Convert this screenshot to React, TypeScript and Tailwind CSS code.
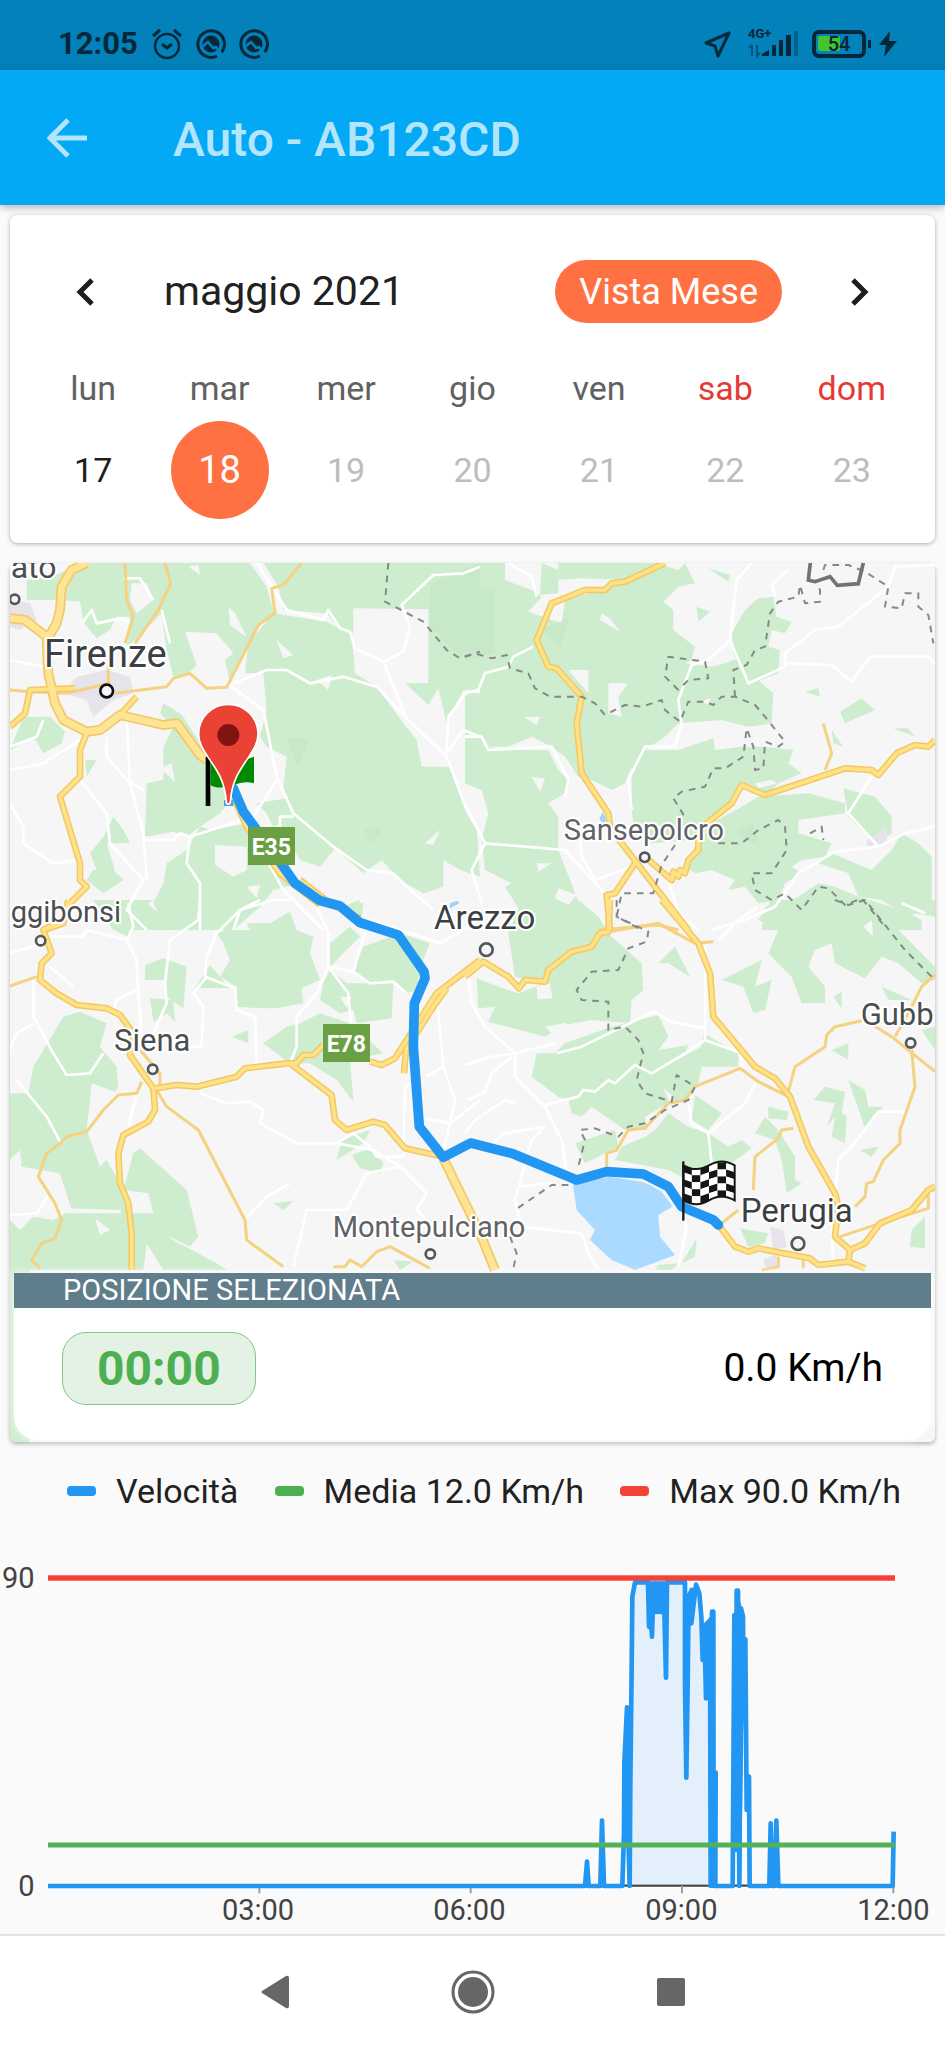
const week = [
  { name: "lun", day: 17 },
  { name: "mar", day: 18 },
  { name: "mer", day: 19 },
  { name: "gio", day: 20 },
  { name: "ven", day: 21 },
  { name: "sab", day: 22 },
  { name: "dom", day: 23 },
];

const legend = [
  { label: "Velocità", color: "bg-[#2196f3]" },
  { label: "Media 12.0 Km/h", color: "bg-[#4caf50]" },
  { label: "Max 90.0 Km/h", color: "bg-[#f44336]" },
];

type Tile = {
  x: number;
  y: number;
  forest: string[];
  clearings: string[];
  minor: string[];
  thin: string[];
  main: string[];
  motorway: string[];
  borders: string[];
};

// The map is split in four tiles, each with its own origin
const tiles: Tile[] = [
  {
    x: 0,
    y: 0,
    forest: [
      "255,39 750,39 800,110 822,190 775,225 745,280 690,400 675,330 700,310 650,250 555,245 590,345 565,370 520,380 500,300 485,190 400,275 380,290 390,200 350,200 330,240 290,265 250,215 240,155 185,150 80,150 80,90 165,75",
      "790,39 1440,39 1440,415 1390,420 1340,520 1315,415 1285,465 1215,400 1285,400 1285,178 1060,175 1060,250 1020,240 980,190 850,180 835,110",
      "820,190 980,215 1055,255 1065,370 1130,410 1210,520 1250,570 1265,650 1350,650 1390,760 1430,830 1440,980 1380,960 1330,930 1330,1010 1270,1030 1200,990 1145,930 1090,970 1000,890 920,850 880,790 850,710 860,620 800,590 780,560 800,480 790,370 735,370 745,280",
      "490,460 540,490 550,500 600,580 620,640 700,740 660,790 600,830 560,860 520,845 435,860 440,700 490,690 490,590 520,530 480,490",
      "770,760 860,745 905,830 1010,890 960,950 900,930 840,820 820,830 800,790",
      "30,600 70,500 150,500 195,545 185,580 130,610 100,560 50,590",
      "255,630 290,630 260,680",
      "340,800 370,840 390,880 320,880 345,960 290,960 270,910 310,860",
      "280,960 340,960 370,990 310,1030 260,990",
      "500,940 560,900 600,830 640,840 740,820 760,840 830,910 900,1000 820,1020 780,1070 700,1140 500,1140 460,1060 490,1000",
      "350,1070 440,1060 540,1140 380,1140",
      "1050,1060 1090,1060 1085,1100",
    ],
    clearings: [
      "395,100 440,100 460,150 410,190 390,150",
      "685,170 705,190 740,262 690,225",
      "480,655 515,640 525,695",
      "645,885 740,890 740,960 700,980 645,945",
      "830,270 880,315 850,325",
      "565,50 600,75 595,45",
      "950,390 995,375 985,420",
      "1275,880 1320,840 1300,885",
      "740,1010 780,1005 770,1045",
    ],
    minor: [
      "370,85 420,85 460,150",
      "250,215 275,180 290,220 360,205 390,215",
      "770,39 860,180 970,210 985,180 1020,235 1050,245 1065,295 1150,335 1220,505 1340,620 1400,780 1440,850",
      "1440,50 1390,70 1300,75 1205,165 1230,230 1210,305 1150,335",
      "680,400 790,480 830,680 880,790 1000,890 1100,960 1180,970 1230,1020 1300,1080",
      "700,400 800,360 860,360 930,400 1030,380 1130,410 1215,500",
      "430,870 520,870 540,850 570,860 760,800 830,690",
      "570,860 560,940 600,1000 600,1140",
      "30,660 130,640 240,570",
      "30,590 110,560 130,510",
      "240,690 320,790 330,880 430,990 380,1080 440,1140",
      "380,500 390,700 430,850 440,990",
      "320,560 320,620 380,690 430,720",
      "1440,425 1400,425 1345,500 1340,610 1390,540 1440,560",
      "700,1140 720,1080 820,1050 880,1050",
      "740,820 850,1020 970,1140",
      "840,840 840,800 880,800",
      "30,330 130,350",
      "485,180 510,280",
      "30,760 70,830 70,880 160,940 240,930",
    ],
    thin: [
      "30,420 90,425 200,430 330,400",
      "345,430 500,410 520,385 570,370 620,415 680,412 775,225 825,190 815,115 850,105 905,39",
      "375,39 380,150 400,200 375,280",
      "495,39 512,100 475,180 405,280",
      "325,340 325,400",
    ],
    main: [
      "30,530 75,490 90,420 225,415",
      "260,550 240,600 240,680 180,740 240,940 240,990 260,1010 210,1060 190,1110 130,1140",
      "360,495 410,440",
      "700,740 740,830 840,970 960,1065",
      "900,990 990,1060 1080,1105",
    ],
    motorway: [
      "260,39 215,60 185,110 180,180 170,220 140,270 145,370 165,460 190,510 260,545 300,540 360,495 490,525 530,520 600,615 620,630",
      "30,205 75,210 140,260",
    ],
    borders: ["1165,39 1155,155 1270,215 1340,300 1380,325 1440,305"],
  },
  {
    x: 1395,
    y: 0,
    forest: [
      "0,39 120,39 120,90 200,120 230,140 190,185 290,220 300,150 370,130 440,100 590,45 640,60 660,39 690,100 640,110 595,155 625,180 625,240 690,290 680,330 660,340 740,350 780,340 830,320 890,400 925,430 920,520 850,530 770,510 640,520 600,560 540,600 500,650 480,700 440,720 380,690 340,680 300,620 260,590 200,560 130,590 60,590 0,560",
      "230,39 280,60 280,130 225,135",
      "280,39 580,39 480,90 350,85 280,90",
      "0,560 60,590 130,600 250,600 280,660 310,690 300,730 250,760 280,800 280,900 350,1080 400,1140 200,1140 120,1010 140,1000 60,960 50,870 70,790 50,720 0,700",
      "540,600 640,600 745,565 750,600 830,590 890,590 985,600 970,640 1010,670 940,700 900,740 830,710 800,760 740,800 720,830 680,870 560,880 510,860 500,780 500,650",
      "700,870 720,830 830,770 880,740 1030,730 1140,760 1140,790 1000,810 1000,850 1100,880 1080,920 1010,930 980,950 1010,970 960,1000 940,1050 880,1060 840,1010 790,1020 810,990 740,960 690,970 660,950",
      "800,250 840,180 880,145 925,140 935,200 980,215 960,250 920,240 910,290 945,300 940,370 860,400 830,360 805,310",
      "1135,715 1230,740 1280,800 1280,850 1230,880 1150,800",
      "1060,940 1100,910 1220,960 1280,900 1310,850 1360,880 1400,920 1400,1070 1330,1100 1250,1050 1180,1040 1150,970",
      "930,1070 1000,1040 1060,1000 1110,1010 1180,1040 1310,1080 1370,1110 1370,1140 890,1140 900,1070",
      "1125,485 1190,445 1230,480 1140,520",
      "1020,425 1060,415 1065,440",
      "1285,535 1330,535 1350,560",
      "695,170 735,185 700,215",
      "730,55 795,75 790,95",
      "1100,540 1135,590 1105,580",
    ],
    clearings: [
      "430,400 490,400 460,440 470,500 430,490",
      "410,190 435,205 465,245 405,210",
      "175,500 225,500 215,525",
      "310,360 370,360 370,430",
      "200,680 240,685 225,725",
      "215,940 260,940 220,965",
      "280,1015 335,1035 310,1065 270,1045",
      "870,700 920,690 935,700 880,715",
      "705,455 735,445 735,465",
      "120,45 200,60 210,120 150,90 120,90",
    ],
    minor: [
      "130,39 200,80 215,140",
      "205,290 145,320 130,350 60,370 40,420 0,430",
      "860,39 815,90 795,270 730,330 680,345 640,450 650,520 630,590 540,590 490,690 500,780",
      "795,270 850,400 960,350 960,310 1050,240 1120,230 1270,110 1290,50 1410,45",
      "960,340 1100,345 1160,395 1215,320 1390,320 1410,340",
      "0,560 50,560 70,600 260,590 310,690 300,740",
      "970,60 920,105 930,140",
      "0,760 60,880 180,890 300,900 420,1030",
      "60,880 20,960 50,1060",
      "1410,830 1320,850 1240,890 1150,790 1220,680",
      "1240,890 1110,905 1000,970 930,1070 840,1110 740,1140",
      "345,860 350,920 390,990 500,950",
      "610,990 640,1090 700,1140",
    ],
    thin: ["1075,520 1100,610 1080,660", "400,1140 580,1125 640,1140"],
    main: [
      "600,39 480,95 440,100 420,120 360,120 260,160 215,270 250,350 275,355 350,440 335,520 350,670 430,790 435,830 470,880 670,1140",
      "1410,570 1390,590 1350,585 1295,610 1240,675 1220,660 1140,655 900,735 830,705 800,760 700,840 700,900 670,930 660,970 645,960 640,980 625,965 620,990 545,925",
      "510,940 450,1030 425,1035 435,1140",
    ],
    motorway: [],
    borders: [
      "0,320 30,310 80,325 125,315 135,355 190,370 210,415 255,440 350,440 390,460 420,495 480,465 530,470 590,450 600,480 645,515 670,455 720,455 745,465 770,440 810,440 870,465 900,500 960,575 940,590 900,575 895,655 870,660 865,590 845,535 835,620 780,655 745,655 720,710 650,725 625,745 665,810",
      "810,440 805,360 845,345 870,300 900,290 915,190 940,155 1000,140 1005,105 1020,160 1065,155 1065,120 1050,90",
      "640,420 600,380 610,320 720,335 730,385 670,390 640,420",
      "1075,60 1080,45 1150,45 1200,65 1270,110 1260,170 1310,175 1320,130 1360,130 1360,170 1390,195 1405,280",
      "630,885 590,945 565,1030 470,1030 455,1100 530,1140",
      "760,880 830,880 880,840 940,810 960,830 965,900 920,970 860,970 870,1020 920,1050 960,1030 1010,1080 1060,1010 1090,1015 1140,1065 1190,1045 1260,1130",
      "1035,850 1070,830 1075,870",
    ],
  },
  {
    x: 0,
    y: 1050,
    forest: [
      "680,90 750,90 740,70 810,70 870,35 890,90 940,110 930,160 960,240 905,265 910,310 830,325 780,325 710,320 710,260 660,230 690,180 670,130 650,100",
      "280,0 600,0 600,50 570,80 500,80 460,0 390,50 385,110 340,90",
      "435,195 490,175 560,200 550,325 500,290 495,240 435,240",
      "450,295 520,300 525,365 500,340 460,365",
      "585,265 630,195 690,265",
      "990,130 1050,80 1080,110 1030,160 990,200",
      "1060,210 1090,140 1200,100 1290,130 1260,200 1250,270 1220,280 1190,250 1110,250",
      "970,250 990,210 1040,250 1180,250 1175,355 1070,370 1060,330 1020,340 960,300",
      "790,430 860,380 900,370 960,340 1050,370 1150,460 1050,480 1060,605 1010,540 930,490 870,490 830,460",
      "160,400 190,350 240,335 320,370 300,440 350,500 355,560 345,575 275,550 270,600 260,690 300,800 320,780 370,870 400,760 420,745 560,870 595,1010 570,1040 510,1010 500,1110 30,1110 30,960 60,990 100,950 160,960 215,930 180,820 65,800 60,750 30,780 30,580 85,580 100,500 130,450",
      "500,1010 650,1090 680,1110 500,1110",
      "1025,720 1110,690 1090,730 1010,780",
      "1055,765 1110,745 1150,790 1140,820 1080,805",
      "820,910 880,903 850,930",
      "695,410 745,390 745,430",
      "1180,1080 1240,1085 1200,1110",
      "1030,20 1080,0 1070,50",
    ],
    clearings: [
      "370,870 445,880 460,940 380,940",
      "285,955 330,990 300,1005",
      "440,1030 490,1110 430,1110",
      "1020,290 1055,290 1040,325",
      "195,925 365,930 360,940 200,940",
    ],
    minor: [
      "130,110 250,110 260,90 380,120 410,180 415,290 430,460",
      "410,270 350,300 340,340",
      "385,10 400,80 380,120",
      "600,0 595,60 510,120 495,250 500,310 460,400",
      "780,0 720,30 650,100 620,170 615,230 705,265 710,330 765,350 770,490",
      "620,230 580,280 610,320 605,440 570,440",
      "950,20 985,100 985,200 1045,280 1055,400",
      "985,200 950,280 890,350 890,440 870,490",
      "985,200 1060,215 1085,130 1110,60 1320,130 1440,60",
      "1060,215 1110,250 1180,245 1220,280",
      "100,240 100,350 160,460 200,525 270,520 310,460",
      "30,450 50,400 100,370",
      "50,540 140,650 180,725",
      "600,580 680,610 750,605 790,630 780,670 890,730 1010,730 1120,750 1200,800 1280,880 1250,930 1320,1000",
      "1010,730 1060,700 1110,740 1130,770 1210,770 1215,560 1260,540",
      "735,960 800,890 870,850",
      "1200,800 1100,820 1040,930 920,930 880,1100",
      "410,580 385,680",
      "1310,280 1330,500 1280,530",
      "1330,500 1365,600 1330,760",
      "30,945 110,940 150,880",
      "1250,650 1350,670 1440,600",
      "30,160 110,135",
      "150,200 220,260",
    ],
    thin: [
      "30,258 110,230",
      "470,570 500,620 595,690 735,960 740,1020 850,1100",
      "425,545 410,580 355,585 310,630 260,695 200,710 180,730 140,760 115,830 165,910 185,960 165,1015 125,1030 95,1080 120,1105",
      "420,450 480,520 480,570",
      "1000,1100 1035,1100 1050,1080 1085,1100 1130,1055 1170,1040 1290,1105",
    ],
    main: [
      "205,0 190,70 130,90 155,160 125,190 120,240 170,280 230,315 320,325 360,345 400,400 390,465 460,565 465,630 445,665 370,705 355,760 360,850 385,910 395,1000 395,1110",
      "465,565 530,555 590,560 710,530 735,505 860,490 890,490 910,465 940,465 970,435",
      "870,490 995,585 1005,660 1040,690 1120,665 1155,675 1215,745 1330,770",
      "1110,485 1145,495 1185,475 1310,280 1440,180",
      "1212,520 1218,450 1300,320 1340,265",
    ],
    motorway: ["1330,775 1440,1000 1485,1110"],
    borders: [],
  },
  {
    x: 1395,
    y: 1050,
    forest: [
      "130,100 170,0 340,0 400,50 440,110 530,190 535,270 500,300 495,370 380,360 300,375 240,410 70,365 90,320 40,325 35,235 100,260 160,280 240,250 150,230",
      "215,460 270,460 300,430 440,380 580,345 610,410 580,450 670,435 660,460 560,520 710,440 715,400 820,460 820,500 710,500 700,550 660,600 610,610 540,650 545,690 480,690 380,620 350,650 320,640 310,600 280,590 200,530",
      "610,640 670,680 730,700 790,740 830,720 860,745 800,790 770,820 650,830 610,810 450,780 470,740 540,710 570,690",
      "690,585 770,640 730,690 680,660",
      "330,730 450,690 460,740 360,790",
      "580,190 630,140 675,230 610,190",
      "770,240 890,180 870,260 920,240 900,330 865,340 835,260",
      "880,60 920,0 1220,0 1310,100 1410,200 1410,240 1370,250 1300,190 1250,170 1200,235 1110,190 1100,130 1050,150 1030,200 1080,260 1080,310 1010,310 980,230 910,160 940,90",
      "1270,0 1410,0 1410,50 1350,40 1310,10",
      "1250,260 1340,300 1270,300",
      "1105,290 1130,275 1130,325",
      "1100,450 1150,430 1150,480",
      "1045,600 1080,560 1140,575 1130,640 1145,650 1140,730 1100,710 1110,650 1085,680 1110,610",
      "1150,540 1200,570 1210,620 1255,620 1200,685",
      "910,620 970,635 965,660 910,655",
      "870,700 900,650 940,690 990,770 990,840 1010,850 965,880 950,780 930,720",
      "1185,750 1240,740 1220,770",
      "825,985 910,1000 900,1030 850,1040",
      "1340,990 1380,950 1380,1045 1335,1040",
      "650,1090 695,1015 690,1070",
      "580,1095 640,1090 620,1110 570,1110",
      "1370,390 1410,380 1410,450",
    ],
    clearings: [
      "215,260 255,250 262,295 218,298",
      "1195,80 1220,60 1225,110",
      "240,380 305,368 285,425",
      "595,565 625,590 615,610",
    ],
    minor: [
      "10,230 20,310 60,380 150,460 150,530 240,620 290,720 310,850",
      "0,495 80,470 150,460 270,430",
      "275,460 350,440 565,335 620,365 720,385",
      "720,140 720,420 660,460 560,520 510,495 450,550 430,540 390,575 355,570 340,590 240,615",
      "720,420 830,460 830,500",
      "150,610 120,600 30,660 0,700",
      "240,680 200,720 150,900 170,980 350,1000 370,1060 400,1110",
      "240,680 120,700 70,740",
      "870,550 840,610 730,700 740,790",
      "730,700 680,670 670,610",
      "880,20 820,60 760,120",
      "1320,635 1240,635 1160,740 1120,780 1110,900",
      "640,1100 665,980 650,930",
      "10,600 60,575 80,520 140,470",
      "160,860 260,850",
      "1100,960 1105,1090",
      "1310,10 1380,40",
    ],
    thin: [
      "405,100 580,70 690,130 745,125",
      "970,575 990,500 1080,440 1085,405 1110,380 1200,360 1280,410 1410,515",
      "1410,225 1370,260 1340,320 1290,410",
      "1340,450 1350,560 1305,690 1305,730 1255,780 1225,845 1205,850 1200,890 1170,920",
      "985,685 950,690 940,715 870,770 865,870",
      "820,930 770,970",
      "425,800 425,760 455,750 490,690 540,685 610,610 660,600 690,560 825,505 880,545 970,590",
      "1125,1010 1245,970 1390,925 1390,880",
      "940,1070 940,1100 890,1110",
      "1015,1080 1015,1105",
    ],
    main: [
      "0,230 55,185 130,230 162,265 180,240 240,245 250,210 320,155 380,140 405,100 430,95 435,0",
      "590,0 700,130 735,220 745,350 870,500 930,535 975,590 1030,740 1110,880 1120,920 1110,1010 1155,1050 1150,1085 1060,1095 1035,1075 880,1045 850,1055 810,1040 765,980",
      "1155,1050 1200,1030 1245,970 1340,930 1390,870 1410,860",
      "1150,1085 1200,1105",
    ],
    motorway: [],
    borders: [
      "455,0 455,50 550,95 545,125 490,145 460,210 380,215 335,270 350,300 430,305 430,390 480,380 520,420 535,460 515,540 540,580 620,605 635,525 690,560 670,600 600,630 540,670 490,680 460,710 390,685 345,690 360,720 340,800",
      "310,855 260,855 150,930",
      "135,1010 155,1060 145,1105",
      "1110,0 1150,15 1200,0 1240,50 1320,150 1410,240",
    ],
  },
];

const route =
  "700,715 730,785 850,950 885,1000 960,1052 1020,1068 1080,1118 1195,1155 1272,1265 1275,1285 1243,1360 1240,1490 1258,1730 1330,1822 1412,1779 1535,1810 1730,1890 1820,1865 1930,1872 2005,1910 2045,1970 2140,2010 2155,2025";

const places = [
  { name: "ato", x: 32, y: 84, size: 96, color: "#4a4e51", dot: [44, 148] },
  { name: "ggibonsi", x: 32, y: 1116, size: 87, color: "#4a4e51", dot: [122, 1172] },
  { name: "Firenze", x: 132, y: 352, size: 114, color: "#3c4043", dot: [320, 423] },
  { name: "Arezzo", x: 1302, y: 1136, size: 99, color: "#3c4043", dot: [1459, 1199] },
  { name: "Sansepolcro", x: 1691, y: 870, size: 87, color: "#5f6368", dot: [1934, 922] },
  { name: "Siena", x: 342, y: 1502, size: 93, color: "#4a4e51", dot: [458, 1558] },
  { name: "Montepulciano", x: 998, y: 2060, size: 87, color: "#5f6368", dot: [1291, 2112] },
  { name: "Perugia", x: 2222, y: 2016, size: 99, color: "#3c4043", dot: [2394, 2081] },
  { name: "Gubb", x: 2582, y: 1424, size: 93, color: "#4a4e51", dot: [2732, 1479] },
];

const line = (points: string) => <polyline key={points} points={points} />;
const area = (points: string) => <polygon key={points} points={points} />;

type Layer = "minor" | "thin" | "main" | "motorway" | "borders";

function Lines({ layer, color, width, dash }: { layer: Layer; color: string; width: number; dash?: string }) {
  return (
    <g fill="none" stroke={color} strokeWidth={width} strokeDasharray={dash} strokeLinejoin="round">
      {tiles.map((tile) => (
        <g key={`${tile.x}-${tile.y}`} transform={`translate(${tile.x} ${tile.y})`}>
          {tile[layer].map(line)}
        </g>
      ))}
    </g>
  );
}

function RoadSign({ x, y, label }: { x: number; y: number; label: string }) {
  return (
    <g>
      <rect x={x} y={y} width="141" height="114" fill="#6a9f43" />
      <text x={x + 70} y={y + 83} fontSize="69" fontWeight="700" fill="#fff" textAnchor="middle">
        {label}
      </text>
    </g>
  );
}

// Waving checkered flag, drawn cell by cell
function FinishFlag() {
  const cols = 6;
  const rows = 5;
  const w = 154 / cols;
  const h = 105 / rows;
  const wave = (c: number) => 10 * Math.sin((c / cols) * Math.PI * 2);
  const cells = [];
  for (let c = 0; c < cols; c++) {
    for (let r = 0; r < rows; r++) {
      const x1 = c * w;
      const x2 = x1 + w;
      const a = wave(c);
      const b = wave(c + 1);
      cells.push(
        <polygon
          key={`${c}-${r}`}
          points={`${x1},${r * h + a} ${x2},${r * h + b} ${x2},${(r + 1) * h + b} ${x1},${(r + 1) * h + a}`}
          fill={(c + r) % 2 === 0 ? "#161616" : "#fff"}
        />,
      );
    }
  }
  return (
    <g transform="translate(2050 1846)">
      {cells}
      <path
        d="M0 0C30 16 50 14 77 0S125 -16 154 0V105C125 90 104 90 77 105S30 121 0 105Z"
        fill="none"
        stroke="#161616"
        strokeWidth="6"
      />
      <path d="M0 -12V166" stroke="#161616" strokeWidth="7" />
    </g>
  );
}

function TripMap() {
  return (
    <svg
      viewBox="30 39 2775 2637"
      className="block w-full rounded-b-md font-['Roboto',sans-serif]"
      role="img"
      aria-label="Percorso da Firenze a Perugia"
    >
      <rect x="0" y="0" width="2835" height="2700" fill="#f6f6f6" />

      {/* Vegetation */}
      <g fill="#cdedce">
        {tiles.map((tile) => (
          <g key={`${tile.x}-${tile.y}`} transform={`translate(${tile.x} ${tile.y})`}>
            {tile.forest.map(area)}
          </g>
        ))}
        <rect x="30" y="2150" width="60" height="600" />
      </g>
      <g fill="#f6f6f6">
        {tiles.map((tile) => (
          <g key={`${tile.x}-${tile.y}`} transform={`translate(${tile.x} ${tile.y})`}>
            {tile.clearings.map(area)}
          </g>
        ))}
      </g>

      {/* Relief */}
      <g fill="#bfe0c2" opacity="0.4">
        <path d="M1290 100l150-60v260l-60 20-90-90zM1395 130l90-20v200l-90 20zM860 560l70 10-40 80zM1090 840l60-10-30 50zM1620 240l90-40-30 90zM2200 850l60-30 20 70z" />
      </g>
      <g fill="#e6e4ea">
        <path d="M230 380l90-20 70 20 10 50-60 20-60 50-20-50-70-20zM30 150l60 10 20 50-50 30-30-10z" />
        <path d="M2310 2030l40 10 10 50-40 10zM2290 2130l40-20v40l-30 10zM2600 870l60-40v50l-60 10z" />
      </g>

      {/* Lago Trasimeno */}
      <polygon
        points="1718,1900 1830,1880 1925,1895 1950,1905 1985,1925 2015,1965 2015,1972 1975,1995 1980,2060 2025,2115 1905,2160 1835,2130 1770,2070 1785,2040 1730,1980"
        fill="#aadaff"
      />
      <path d="M1798 805l10-18 10 18-6 24zM1350 1060l22-8 6 8-30 16z" fill="#9fd3fb" />

      <Lines layer="minor" color="#ffffff" width={8} />
      <Lines layer="thin" color="#f4d282" width={9} />
      <Lines layer="main" color="#f2c863" width={20} />
      <Lines layer="motorway" color="#f2c863" width={30} />
      <Lines layer="main" color="#ffe188" width={11} />
      <Lines layer="motorway" color="#ffe496" width={20} />
      <Lines layer="borders" color="#868988" width={6} dash="20 18" />
      <polyline
        points="2432,30 2425,90 2445,95 2490,80 2512,106 2575,101 2592,30"
        fill="none"
        stroke="#737373"
        strokeWidth="11"
      />

      {/* Towns */}
      <g stroke="#fff" strokeWidth="12" paintOrder="stroke" strokeLinejoin="round">
        {places.map((place) => (
          <text key={place.name} x={place.x} y={place.y} fontSize={place.size} fill={place.color}>
            {place.name}
          </text>
        ))}
      </g>
      <g fill="#f6f6f6" stroke="#54575a" strokeWidth="8">
        {places.map((place) => (
          <circle
            key={place.name}
            cx={place.dot[0]}
            cy={place.dot[1]}
            r={place.size > 96 ? 19 : 14}
            stroke={place.name === "Firenze" ? "#111" : undefined}
          />
        ))}
      </g>

      {/* Trip */}
      <polyline
        points={route}
        fill="none"
        stroke="#2196f3"
        strokeWidth="29"
        strokeLinejoin="round"
        strokeLinecap="round"
      />
      <RoadSign x={744} y={831} label="E35" />
      <RoadSign x={969} y={1422} label="E78" />

      <path d="M672 750h28v18h-28z" fill="#5b9be6" />
      <path d="M617 620h14v148h-14z" />
      <path d="M631 625c45-20 85 15 131-5v80c-46-15-90 30-131 5z" fill="#008a00" />
      <path
        d="M685 762c-3 0-6-2-6-6-4-62-28-96-56-136-14-22-27-42-27-68a89 89 0 0 1 178 0c0 26-13 46-27 68-28 40-52 74-56 136 0 4-3 6-6 6z"
        fill="#ea4335"
        stroke="#fff"
        strokeWidth="5"
      />
      <circle cx="685" cy="555" r="33" fill="#811411" />

      <FinishFlag />
    </svg>
  );
}

const speed =
  "-1536,1008 75,1008 81,935 86,1008 121,1008 126,812 132,1008 187,1008 192,850 193,640 201,472 204,820 209,1008 211,700 215,350 217,140 225,97 264,97 267,230 270,100 276,260 280,100 285,186 288,100 293,186 299,100 304,186 309,100 313,186 318,383 321,97 335,97 350,97 375,97 375,400 379,683 383,400 386,140 395,120 394,220 408,104 418,130 424,200 428,330 433,225 438,445 442,220 450,215 452,1008 456,185 460,185 461,1008 467,668 466,1008 518,1008 523,195 527,900 530,122 534,122 538,1008 543,175 549,200 551,500 556,268 560,780 567,680 569,1008 628,1008 632,820 637,1008 644,1008 649,812 655,1008 998,1008 1001,845";

function SpeedChart() {
  return (
    <svg
      viewBox="0 0 2835 1182"
      className="block w-full font-['Roboto',sans-serif]"
      role="img"
      aria-label="Grafico della velocità"
    >
      <path d="M144 1037H2685" stroke="#444" strokeWidth="7" />
      <g stroke="#9e9e9e" strokeWidth="6">
        <path d="M778 1037V1060M1412 1037V1060M2046 1037V1060M2680 1037V1060" />
      </g>
      <g transform="translate(1680 30)">
        <polygon points="215,1003 217,140 225,97 375,97 386,140 408,104 424,200 450,480 450,1003" fill="#e3f0fb" />
        <g fill="#2196f3">
          <path d="M262 95H325V192H285L276 262L264 230ZM428 225L460 190L466 1008H448L444 445H434ZM523 195L532 122L546 175L556 268L556 780L551 500L543 1008H533L528 560L520 1008ZM192 640L201 472H212L206 820ZM630 900L655 880V1008H628Z" />
        </g>
        <polyline
          points={speed}
          fill="none"
          stroke="#2196f3"
          strokeWidth="14"
          strokeLinejoin="round"
        />
      </g>
      <path d="M144 114H2685" stroke="#f44336" strokeWidth="16" />
      <path d="M144 915H2685" stroke="#54b158" strokeWidth="15" />
      <g fontSize="87" fill="#424242">
        <text x="104" y="143" textAnchor="end">90</text>
        <text x="104" y="1067" textAnchor="end">0</text>
        <text x="774" y="1140" textAnchor="middle">03:00</text>
        <text x="1408" y="1140" textAnchor="middle">06:00</text>
        <text x="2044" y="1140" textAnchor="middle">09:00</text>
        <text x="2680" y="1140" textAnchor="middle">12:00</text>
      </g>
    </svg>
  );
}

function AppIcon() {
  return (
    <svg viewBox="0 0 30 30" className="size-[30px]" fill="none">
      <path d="M21 27a13.300 13.300 0 1 1 4-3" stroke="currentColor" strokeWidth="3" />
      <circle cx="15" cy="15" r="8.500" fill="currentColor" />
      <path d="M6 18l6-5 5 6 3-1 8 10" stroke="#0281bb" strokeWidth="2.500" />
    </svg>
  );
}

function StatusBar() {
  return (
    <div className="flex h-[70px] items-end justify-between bg-[#0281bb] pb-[10px] pl-[58px] pr-12 text-[#04283a]">
      <div className="flex h-8 items-center gap-[13px]">
        <span className="text-[31px] font-bold leading-8">12:05</span>
        <svg viewBox="0 0 32 32" className="size-8" fill="none" stroke="currentColor" strokeWidth="2.500">
          <circle cx="16" cy="18" r="12" />
          <path d="M11 16l5 4 5-4M2 8l7-6M30 8l-7-6" strokeWidth="3" />
        </svg>
        <AppIcon />
        <AppIcon />
      </div>
      <div className="flex h-8 items-center">
        <svg viewBox="0 0 28 28" className="mr-4 size-7" fill="none" stroke="currentColor" strokeWidth="3">
          <path d="M25 3L2 13l9 3 3 10z" strokeLinejoin="round" />
        </svg>
        <svg viewBox="0 0 50 32" className="mr-[14px] h-8 w-[50px]" fill="currentColor">
          <text x="0" y="10" fontSize="13" fontWeight="700">4G+</text>
          <path d="M4 17v11M1 20l3-3M9 17v11l3-3" fill="none" stroke="currentColor" strokeWidth="2" opacity="0.5" />
          <path d="M14 28v-2l7-4v6zM24 17h4v11h-4zM31 12h4v16h-4zM38 7h5v21h-5z" />
          <path d="M46 3h4v25h-4z" opacity="0.35" />
        </svg>
        <svg viewBox="0 0 60 28" className="mr-[7px] h-7 w-[60px]">
          <rect x="2" y="2" width="50" height="24" rx="5" fill="none" stroke="currentColor" strokeWidth="4" />
          <rect x="6" y="6" width="22" height="15" rx="2" fill="#45c42b" />
          <rect x="56" y="10" width="3" height="8" fill="currentColor" />
          <text x="27" y="21" fontSize="20" fontWeight="500" fill="currentColor" textAnchor="middle">54</text>
        </svg>
        <svg viewBox="0 0 18 26" className="h-[26px] w-[18px]" fill="currentColor">
          <path d="M11 0L0 14h7L5 26 18 10h-8z" />
        </svg>
      </div>
    </div>
  );
}

function dayColor(day: number) {
  if (day === 18) return "bg-[#ff7143] text-white text-[38px]";
  if (day === 17) return "text-[#1d1d1d]";
  return "text-[#bdbdbd]";
}

function WeekCard() {
  return (
    <section className="mx-[10px] mt-[10px] rounded-lg bg-white px-5 pb-6 pt-[45px] shadow-[0_1px_4px_rgba(0,0,0,0.3)]">
      <div className="flex h-[63px] items-center">
        <button type="button" aria-label="Settimana precedente" className="flex w-[114px] justify-center pr-1">
          <svg viewBox="0 0 18 28" className="h-7 w-[18px]" fill="none" stroke="#1d1d1d" strokeWidth="5">
            <path d="M16 2L4 14l12 12" />
          </svg>
        </button>
        <h2 className="flex-1 pl-5 text-[41px] text-[#212121]">maggio 2021</h2>
        <button type="button" className="h-[63px] rounded-full bg-[#ff7143] px-6 text-[36px] text-white">
          Vista Mese
        </button>
        <button type="button" aria-label="Settimana successiva" className="flex w-[133px] justify-center pl-[22px]">
          <svg viewBox="0 0 18 28" className="h-7 w-[18px]" fill="none" stroke="#1d1d1d" strokeWidth="5">
            <path d="M2 2l12 12L2 26" />
          </svg>
        </button>
      </div>

      <div className="mt-[45px] grid grid-cols-7 text-center text-[34px] leading-10">
        {week.map(({ name, day }) => (
          <div key={name} className="flex flex-col items-center gap-[13px]">
            <span className={day > 21 ? "text-[#e53935]" : "text-[#616161]"}>{name}</span>
            <button type="button" className={`size-[98px] rounded-full ${dayColor(day)}`}>
              {day}
            </button>
          </div>
        ))}
      </div>
    </section>
  );
}

export default function App() {
  return (
    <div className="min-h-screen bg-[#fafafa] font-['Roboto',sans-serif]">
      <StatusBar />
      <header className="relative flex h-[135px] items-center bg-[#03a9f5] pl-[47px] text-[#b3e5fc] shadow-[0_2px_8px_rgba(0,0,0,0.3)]">
        <button type="button" aria-label="Indietro">
          <svg viewBox="0 0 40 40" className="size-10" fill="none" stroke="currentColor" strokeWidth="5">
            <path d="M40 20H5M21 2L3 20l18 18" />
          </svg>
        </button>
        <h1 className="pl-[86px] pt-1 text-[48px] font-medium">Auto - AB123CD</h1>
      </header>

      <WeekCard />

      {/* Map with the selected position on top */}
      <section className="relative mx-[10px] mt-5 rounded-md shadow-[0_2px_4px_rgba(0,0,0,0.3)]">
        <TripMap />
        <div className="absolute inset-x-1 bottom-[2px] rounded-b-3xl bg-white shadow-[0_0_8px_rgba(255,255,255,0.9)]">
          <h3 className="bg-[#607d8b] px-[49px] text-[29px] leading-[35px] text-white">POSIZIONE SELEZIONATA</h3>
          <div className="flex items-center justify-between px-[48px] pb-[35px] pt-6">
            <span className="rounded-3xl border border-[#81c784] bg-[#e4f2e5] px-[34px] text-[48px] font-bold leading-[71px] text-[#4caf50]">
              00:00
            </span>
            <span className="text-[39px] text-black">0.0 Km/h</span>
          </div>
        </div>
      </section>

      <ul className="flex h-[98px] items-center justify-between pl-[67px] pr-[44px] text-[34px] text-[#212121]">
        {legend.map((item) => (
          <li key={item.label} className="flex items-center gap-5">
            <span className={`h-[10px] w-[29px] rounded ${item.color}`} />
            {item.label}
          </li>
        ))}
      </ul>
      <SpeedChart />

      <nav className="flex h-[114px] items-center justify-center gap-[100px] border-t-2 border-[#e4e4e4] bg-white text-[#666]">
        <button type="button" aria-label="Indietro" className="flex w-[98px] justify-center">
          <svg viewBox="0 0 28 34" className="h-[34px] w-7" fill="currentColor">
            <path d="M25 1Q28 0 28 3V31Q28 34 25 33L1 18Q0 17 1 16Z" />
          </svg>
        </button>
        <button type="button" aria-label="Home" className="flex w-[98px] justify-center">
          <svg viewBox="0 0 44 44" className="size-11">
            <circle cx="22" cy="22" r="20" fill="none" stroke="currentColor" strokeWidth="3" />
            <circle cx="22" cy="22" r="15" fill="currentColor" />
          </svg>
        </button>
        <button type="button" aria-label="App recenti" className="flex w-[98px] justify-center">
          <svg viewBox="0 0 28 28" className="size-7" fill="currentColor">
            <rect width="28" height="28" rx="2" />
          </svg>
        </button>
      </nav>
    </div>
  );
}
